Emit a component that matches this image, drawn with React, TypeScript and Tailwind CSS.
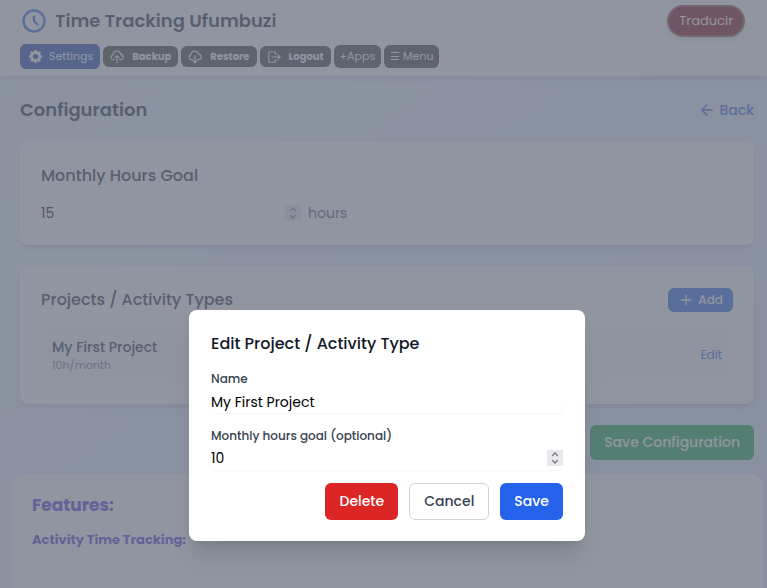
import type { ReactNode } from "react";
import { ArrowLeft, Plus } from "lucide-react";

function CloudArrow({ down = false }: { down?: boolean }) {
  return (
    <svg width="14" height="14" viewBox="0 0 16 16" fill="none" stroke="currentColor" strokeWidth="1.3" strokeLinecap="round" strokeLinejoin="round" aria-hidden="true">
      <path d="M5 11H3.800A2.700 2.700 0 0 1 3.200 5.700C3 3.500 5 1.300 7.700 1.300c2.300 0 4 1.500 4.400 3.700a3 3 0 0 1-.1 6h-1" />
      {down ? <path d="M8 6.500v8M5.700 12.300 8 14.500l2.300-2.200" /> : <path d="M8 14.500v-8M5.700 8.700 8 6.500l2.300 2.200" />}
    </svg>
  );
}

function LogoutIcon() {
  return (
    <svg width="14" height="14" viewBox="0 0 16 16" fill="none" stroke="currentColor" strokeWidth="1.300" strokeLinecap="round" strokeLinejoin="round" aria-hidden="true">
      <path d="M10 5V3.500A1.500 1.500 0 0 0 8.500 2h-5A1.500 1.500 0 0 0 2 3.500v9A1.500 1.500 0 0 0 3.500 14h5a1.500 1.500 0 0 0 1.500-1.500V11M5.500 8H15M12.500 5.500 15 8l-2.500 2.500" />
    </svg>
  );
}

function GearIcon() {
  return (
    <svg width="17" height="17" viewBox="0 0 20 20" fill="currentColor" aria-hidden="true">
      <path fillRule="evenodd" clipRule="evenodd" d="M11.490 3.170c-.38-1.560-2.600-1.560-2.980 0a1.532 1.532 0 0 1-2.286.948c-1.372-.836-2.942.734-2.106 2.106.54.886.061 2.042-.947 2.287-1.561.379-1.561 2.600 0 2.978a1.532 1.532 0 0 1 .947 2.287c-.836 1.372.734 2.942 2.106 2.106a1.532 1.532 0 0 1 2.287.947c.379 1.561 2.600 1.561 2.978 0a1.533 1.533 0 0 1 2.287-.947c1.372.836 2.942-.734 2.106-2.106a1.533 1.533 0 0 1 .947-2.287c1.561-.379 1.561-2.600 0-2.978a1.532 1.532 0 0 1-.947-2.287c.836-1.372-.734-2.942-2.106-2.106a1.532 1.532 0 0 1-2.287-.947zM10 13a3 3 0 1 0 0-6 3 3 0 0 0 0 6z" />
    </svg>
  );
}

function NumberField({ id, value, label }: { id: string; value: number; label?: string }) {
  return (
    <div className="flex h-6 w-full items-center rounded-md bg-white shadow-xs">
      <input
        id={id}
        type="number"
        defaultValue={value}
        aria-label={label}
        className="w-0 min-w-0 flex-1 bg-transparent text-[14px] leading-5 text-black outline-none [appearance:textfield] [&::-webkit-inner-spin-button]:appearance-none"
      />
      <svg className="bg-[#e9e9ed] text-[#7a7a84]" width="16" height="16" viewBox="0 0 16 16" fill="none" stroke="currentColor" strokeWidth="1.300" strokeLinecap="round" aria-hidden="true">
        <path d="M5.500 5.500L8 3l2.500 2.500M5.500 10.500L8 13l2.500-2.500" />
      </svg>
    </div>
  );
}

function ToolButton({ icon, label }: { icon: ReactNode; label: string }) {
  return (
    <button type="button" className="flex h-[21px] items-center rounded-md bg-[#3a3a3a] px-[7px] text-[10px] font-bold text-white">
      {icon}
      <span className="ml-2">{label}</span>
    </button>
  );
}

function Header() {
  return (
    <header className="bg-white px-5 pt-[5px] pb-[7px] shadow-md">
      <div className="flex items-center justify-between pr-[2px]">
        <div className="flex items-center gap-[7px]">
          <svg className="text-[#2563eb]" width="28" height="28" viewBox="0 0 24 24" fill="none" stroke="currentColor" strokeWidth="2" strokeLinecap="round" strokeLinejoin="round" aria-hidden="true">
            <path d="M12 8v4l3 3m6-3a9 9 0 1 1-18 0 9 9 0 0 1 18 0z" />
          </svg>
          <h1 className="text-[18px] leading-7 font-semibold text-[#1f2937]">Time Tracking Ufumbuzi</h1>
        </div>
        <button type="button" className="h-8 rounded-full border-2 border-[#904848] bg-[#800010] px-[10px] text-[13px] text-white shadow-md">
          Traducir
        </button>
      </div>
      <nav className="mt-[7px] flex items-center gap-[3px]">
        <button type="button" className="flex h-[25px] items-center gap-[5px] rounded-md bg-[#1e40af] px-[7px] text-[11px] text-white">
          <GearIcon />
          Settings
        </button>
        <ToolButton icon={<CloudArrow />} label="Backup" />
        <ToolButton icon={<CloudArrow down />} label="Restore" />
        <ToolButton icon={<LogoutIcon />} label="Logout" />
        <button type="button" className="h-[23px] rounded-md bg-[#3a3a3a] px-[6px] text-[11px] text-white">+Apps</button>
        <button type="button" className="h-[23px] rounded-md bg-[#3a3a3a] px-[6px] text-[11px] text-white">☰ Menu</button>
      </nav>
    </header>
  );
}

function ConfigurationPage() {
  return (
    <main className="pr-[13px] pl-5">
      <div className="flex items-center justify-between pt-5">
        <h2 className="text-[18px] leading-7 font-semibold text-[#1f2937]">Configuration</h2>
        <a href="#back" className="flex items-center gap-1 text-[14px] font-medium text-[#2563eb]">
          <ArrowLeft size={18} strokeWidth={2} aria-hidden="true" />
          Back
        </a>
      </div>

      <section className="mt-[18px] rounded-lg bg-white px-[21px] pt-[22px] pb-5 shadow-md">
        <h3 className="text-[16px] leading-6 font-medium text-[#1f2937]">Monthly Hours Goal</h3>
        <div className="mt-[13px] flex items-center gap-[7px]">
          <div className="w-[260px]">
            <NumberField id="monthly-goal" value={15} label="Monthly hours goal" />
          </div>
          <span className="text-[14px] leading-5 text-[#4b5563]">hours</span>
        </div>
      </section>

      <section className="mt-[21px] rounded-lg bg-white px-[21px] pt-[22px] pb-[21px] shadow-md">
        <div className="flex items-center justify-between">
          <h3 className="text-[16px] leading-6 font-medium text-[#1f2937]">Projects / Activity Types</h3>
          <button type="button" className="flex h-6 items-center gap-1 rounded-md bg-[#2563eb] px-[10px] text-[12px] font-medium text-white">
            <Plus size={16} aria-hidden="true" />
            Add
          </button>
        </div>
        <div className="mt-[14px] flex items-center justify-between rounded-md bg-[#f9fafb] px-[11px] pt-[11px] pb-[10px]">
          <div>
            <p className="text-[14px] leading-[21px] font-medium text-[#1f2937]">My First Project</p>
            <p className="text-[11px] leading-[15px] text-[#6b7280]">10h/month</p>
          </div>
          <button type="button" className="text-[12px] text-[#2563eb]">Edit</button>
        </div>
      </section>

      <div className="mt-[21px] flex justify-end">
        <button type="button" className="h-[35px] rounded-md bg-[#16a34a] px-[14px] text-[14px] font-medium text-white">
          Save Configuration
        </button>
      </div>
    </main>
  );
}

function Features() {
  return (
    <section className="mt-[14px] mr-1 ml-3 min-h-[200px] rounded-xl bg-white px-5 pt-[17px]">
      <h2 className="text-[17px] leading-7 font-bold text-[#4f35e0]">Features:</h2>
      <h3 className="mt-[11px] text-[13px] leading-5 font-bold text-[#4f35e0]">Activity Time Tracking:</h3>
    </section>
  );
}

function EditDialog() {
  return (
    <div className="absolute inset-0 flex items-start justify-center pt-[310px] pl-[7px]">
      <div role="dialog" aria-modal="true" aria-labelledby="dialog-title" className="w-full max-w-[396px] rounded-lg bg-white px-[22px] pt-[22px] pb-[21px] shadow-xl">
        <h3 id="dialog-title" className="text-[16px] leading-6 font-medium text-[#111827]">Edit Project / Activity Type</h3>
        <form className="mt-[14px]">
          <label htmlFor="project-name" className="block text-[12px] leading-[18px] font-medium text-[#374151]">Name</label>
          <input id="project-name" type="text" defaultValue="My First Project" className="mt-[3px] block h-[22px] w-full rounded-md bg-white text-[14px] leading-5 text-black shadow-xs outline-none" />
          <label htmlFor="project-goal" className="mt-[14px] mb-px block text-[12px] leading-[18px] font-medium text-[#374151]">Monthly hours goal (optional)</label>
          <NumberField id="project-goal" value={10} />
          <div className="mt-[13px] flex justify-end gap-[11px]">
            <button type="button" className="h-[37px] rounded-md bg-[#dc2626] px-[14px] text-[14px] font-medium text-white">Delete</button>
            <button type="button" className="h-[37px] rounded-md border border-[#d1d5db] bg-white px-[14px] text-[14px] font-medium text-[#374151]">Cancel</button>
            <button type="button" className="h-[37px] rounded-md bg-[#2563eb] px-[14px] text-[14px] font-medium text-white">Save</button>
          </div>
        </form>
      </div>
    </div>
  );
}

export default function App() {
  return (
    <div className="relative h-screen overflow-hidden bg-gradient-to-br from-[#eff6ff] to-[#e0e7ff] font-[Poppins,Inter,sans-serif]">
      <Header />
      <ConfigurationPage />
      <Features />
      <div className="absolute inset-0 bg-[#6b7280]/75" />
      <EditDialog />
    </div>
  );
}
